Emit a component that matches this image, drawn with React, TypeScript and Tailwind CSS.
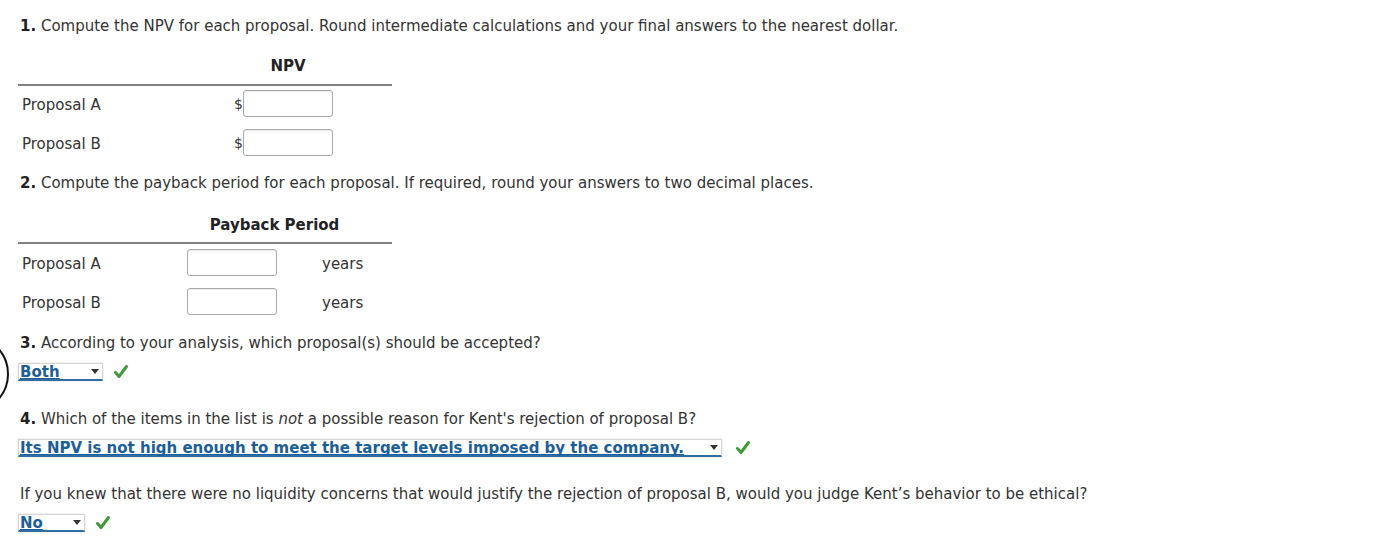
import React from 'react';

const FONT = "font-['Verdana','DejaVu_Sans',sans-serif]";

const Check = () => (
  <svg width="16" height="16" viewBox="0 0 16 16" className="shrink-0">
    <path d="M2.5 8.5 L6 12.5 L13.5 2.5" fill="none" stroke="#3f9a3a" strokeWidth="3" strokeLinecap="round" strokeLinejoin="round" />
  </svg>
);

const AnswerSelect = ({ value, width }: { value: string; width: string }) => (
  <div className={`relative flex h-[18px] items-center bg-white border border-[#d4d4d4] border-b-2 border-b-[#2f6da3] shadow-[0_0_2px_rgba(0,0,0,0.15)] ${width}`}>
    <span className="pl-[1px] text-[15px] leading-[16px] font-bold text-[#1b5e9c] underline decoration-[#1b5e9c] underline-offset-[1px] [text-decoration-skip-ink:none] whitespace-nowrap">
      {value}
    </span>
    <span className="absolute right-[3px] top-[5px] w-0 h-0 border-l-[4px] border-r-[4px] border-t-[5px] border-l-transparent border-r-transparent border-t-[#333]" />
  </div>
);

const Box = () => (
  <div className="w-[90px] h-[27px] rounded-[3px] border border-[#a9a9a9] bg-white shadow-[inset_0_1px_1px_rgba(0,0,0,0.08)]" />
);

export default function App() {
  return (
    <div className={`relative w-[1393px] h-[558px] bg-white text-[#333] text-[15px] ${FONT}`}>
      {/* partial circle at left edge */}
      <svg className="absolute left-0 top-[345px]" width="12" height="58" viewBox="0 0 12 58">
        <circle cx="-30" cy="29" r="38" fill="none" stroke="#111" strokeWidth="2" />
      </svg>

      <div className="pl-[18px] pt-[16px]">
        <p className="h-5 leading-5 pl-[2px]">
          <b className="text-[#222]">1.</b> Compute the NPV for each proposal. Round intermediate calculations and your final answers to the nearest dollar.
        </p>

        {/* NPV table */}
        <div className="w-[374px] mt-[20px]">
          <div className="flex h-[30px] pb-[8px] border-b-2 border-[#808080]">
            <div className="w-[225px]" />
            <div className="w-[90px] text-center font-bold text-[#222] leading-5">NPV</div>
          </div>
          <div className="flex items-center h-[27px] mt-[4px]">
            <div className="w-[216px] pl-[4px] pt-[3px]">Proposal A</div>
            <div className="w-[9px] text-[14px] pt-[2px]">$</div>
            <Box />
          </div>
          <div className="flex items-center h-[27px] mt-[12px]">
            <div className="w-[216px] pl-[4px] pt-[3px]">Proposal B</div>
            <div className="w-[9px] text-[14px] pt-[2px]">$</div>
            <Box />
          </div>
        </div>

        <p className="h-5 leading-5 pl-[2px] mt-[17px]">
          <b className="text-[#222]">2.</b> Compute the payback period for each proposal. If required, round your answers to two decimal places.
        </p>

        {/* Payback table */}
        <div className="w-[374px] mt-[22px]">
          <div className="flex h-[29px] pb-[7px] border-b-2 border-[#808080]">
            <div className="w-[169px]" />
            <div className="w-[175px] text-center font-bold text-[#222] leading-5">Payback Period</div>
          </div>
          <div className="flex items-center h-[27px] mt-[5px]">
            <div className="w-[169px] pl-[4px] pt-[3px]">Proposal A</div>
            <Box />
            <div className="pl-[45px] pt-[3px]">years</div>
          </div>
          <div className="flex items-center h-[27px] mt-[12px]">
            <div className="w-[169px] pl-[4px] pt-[3px]">Proposal B</div>
            <Box />
            <div className="pl-[45px] pt-[3px]">years</div>
          </div>
        </div>

        <p className="h-5 leading-5 pl-[2px] mt-[18px]">
          <b className="text-[#222]">3.</b> According to your analysis, which proposal(s) should be accepted?
        </p>
        <div className="flex items-center gap-[10px] mt-[10px]">
          <AnswerSelect value="Both" width="w-[85px]" />
          <Check />
        </div>

        <p className="h-5 leading-5 pl-[2px] mt-[28px]">
          <b className="text-[#222]">4.</b> Which of the items in the list is <i>not</i> a possible reason for Kent's rejection of proposal B?
        </p>
        <div className="flex items-center gap-[13px] mt-[10px]">
          <AnswerSelect value="Its NPV is not high enough to meet the target levels imposed by the company." width="w-[704px]" />
          <Check />
        </div>

        <p className="h-5 leading-5 pl-[2px] mt-[27px]">
          If you knew that there were no liquidity concerns that would justify the rejection of proposal B, would you judge Kent’s behavior to be ethical?
        </p>
        <div className="flex items-center gap-[10px] mt-[10px]">
          <AnswerSelect value="No" width="w-[67px]" />
          <Check />
        </div>
      </div>
    </div>
  );
}
